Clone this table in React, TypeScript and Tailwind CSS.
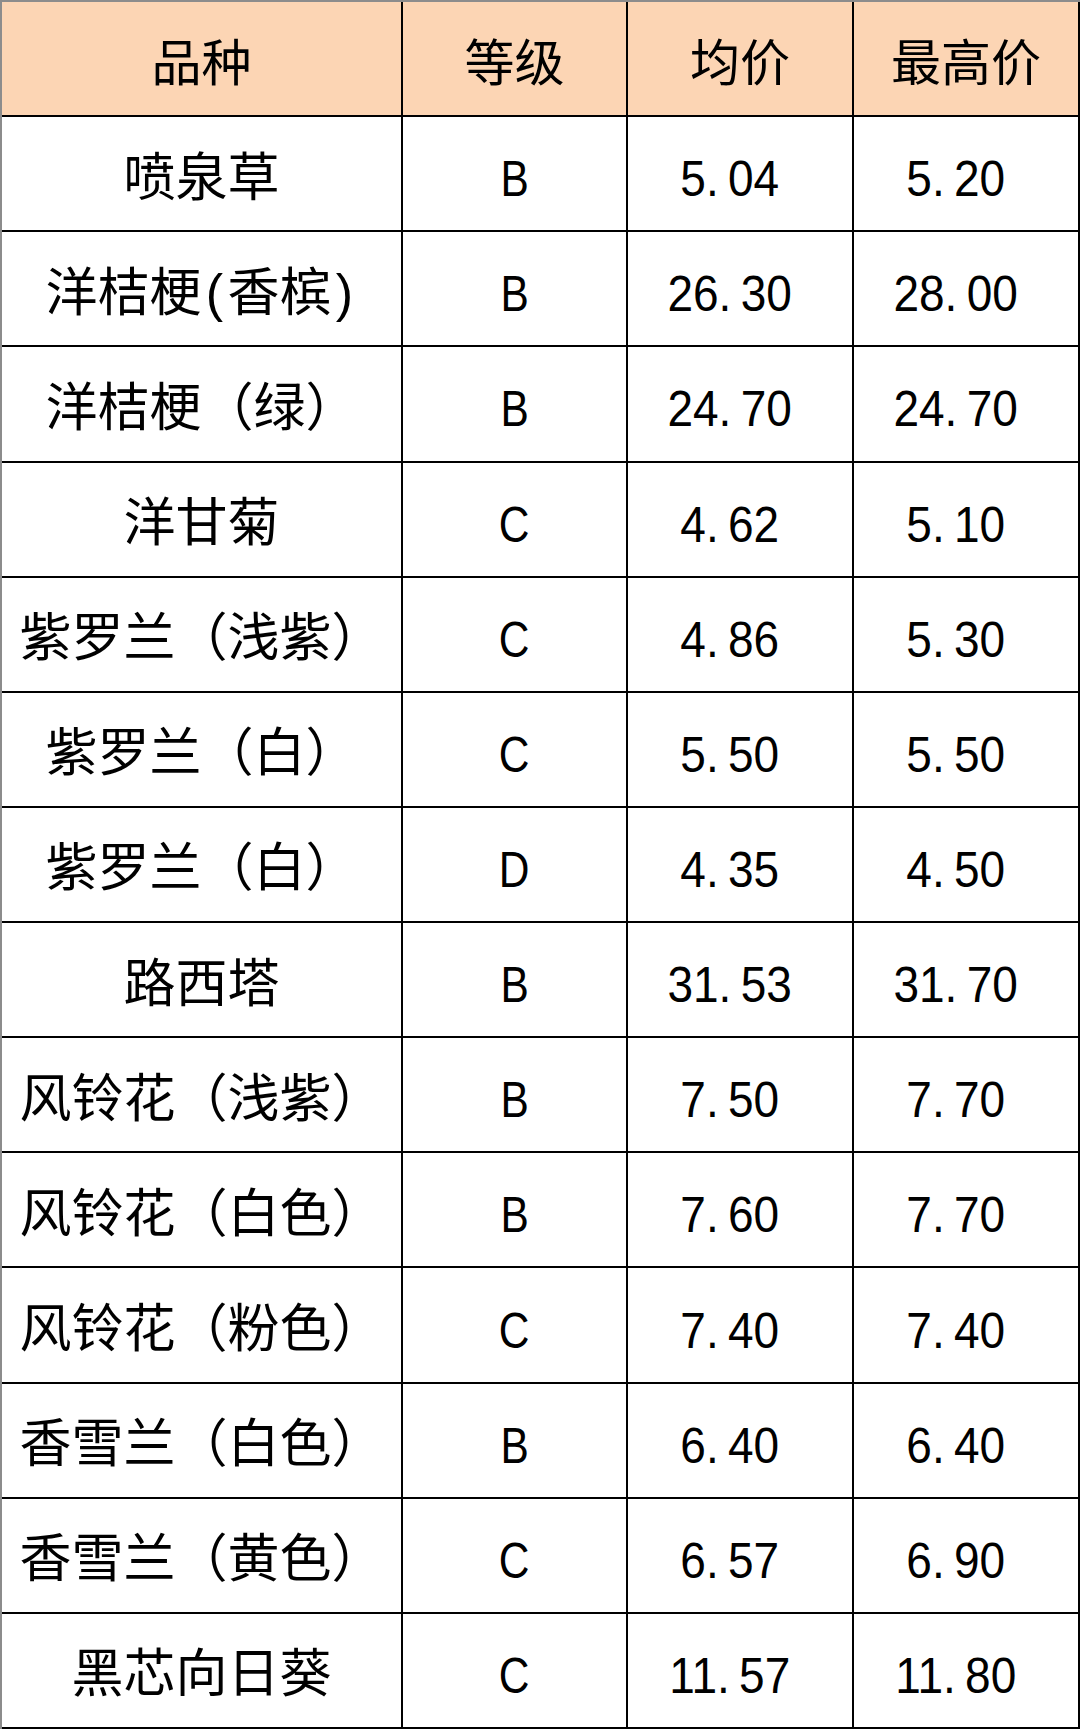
const rows = [
  ["喷泉草", "B", "5.04", "5.20"],
  ["洋桔梗(香槟)", "B", "26.30", "28.00"],
  ["洋桔梗（绿）", "B", "24.70", "24.70"],
  ["洋甘菊", "C", "4.62", "5.10"],
  ["紫罗兰（浅紫）", "C", "4.86", "5.30"],
  ["紫罗兰（白）", "C", "5.50", "5.50"],
  ["紫罗兰（白）", "D", "4.35", "4.50"],
  ["路西塔", "B", "31.53", "31.70"],
  ["风铃花（浅紫）", "B", "7.50", "7.70"],
  ["风铃花（白色）", "B", "7.60", "7.70"],
  ["风铃花（粉色）", "C", "7.40", "7.40"],
  ["香雪兰（白色）", "B", "6.40", "6.40"],
  ["香雪兰（黄色）", "C", "6.57", "6.90"],
  ["黑芯向日葵", "C", "11.57", "11.80"],
];

const headers = ["品种", "等级", "均价", "最高价"];

// half-width parens get a half-em box, like the sheet's font
function Name({ text }: { text: string }) {
  return (
    <span>
      {text.split("").map((ch, i) =>
        ch === "(" || ch === ")" ? (
          <span key={i} className="inline-block w-[26px] text-center">
            {ch}
          </span>
        ) : (
          <span key={i}>{ch}</span>
        )
      )}
    </span>
  );
}

// spaced period, like the half-width period in the source sheet
function Num({ value }: { value: string }) {
  const [a, b] = value.split(".");
  return (
    <span className="inline-block scale-x-[0.92] -translate-x-[10px]">
      {a}
      <span className="inline-block w-[24px] text-left">.</span>
      {b}
    </span>
  );
}

export default function App() {
  return (
    <div className="w-[1080px] h-[1729px] bg-white border-l-2 border-t-2 border-l-[#8c8c8c] border-t-[#8c8c8c] font-['Liberation_Sans','Noto_Sans_CJK_SC',sans-serif] text-black">
      <div className="grid h-full grid-cols-[401px_225px_226px_226px] grid-rows-[repeat(15,minmax(0,1fr))]">
        {headers.map((h) => (
          <div
            key={h}
            className="flex items-center justify-center border-r-2 border-b-2 border-black bg-[#fcd5b4] text-[50px] pt-[2px] font-['Noto_Sans_CJK_SC',sans-serif]"
          >
            {h}
          </div>
        ))}
        {rows.map((r, i) => (
          <div key={i} className="contents">
            <div className="flex items-center justify-center border-r-2 border-b-2 border-black text-[52px] pt-[8px]">
              <Name text={r[0]} />
            </div>
            <div className="flex items-center justify-center border-r-2 border-b-2 border-black text-[50px] pt-[12px]">
              <span className="inline-block scale-x-[0.85]">{r[1]}</span>
            </div>
            <div className="flex items-center justify-center border-r-2 border-b-2 border-black text-[50px] pt-[12px]">
              <Num value={r[2]} />
            </div>
            <div className="flex items-center justify-center border-r-2 border-b-2 border-black text-[50px] pt-[12px]">
              <Num value={r[3]} />
            </div>
          </div>
        ))}
      </div>
    </div>
  );
}
